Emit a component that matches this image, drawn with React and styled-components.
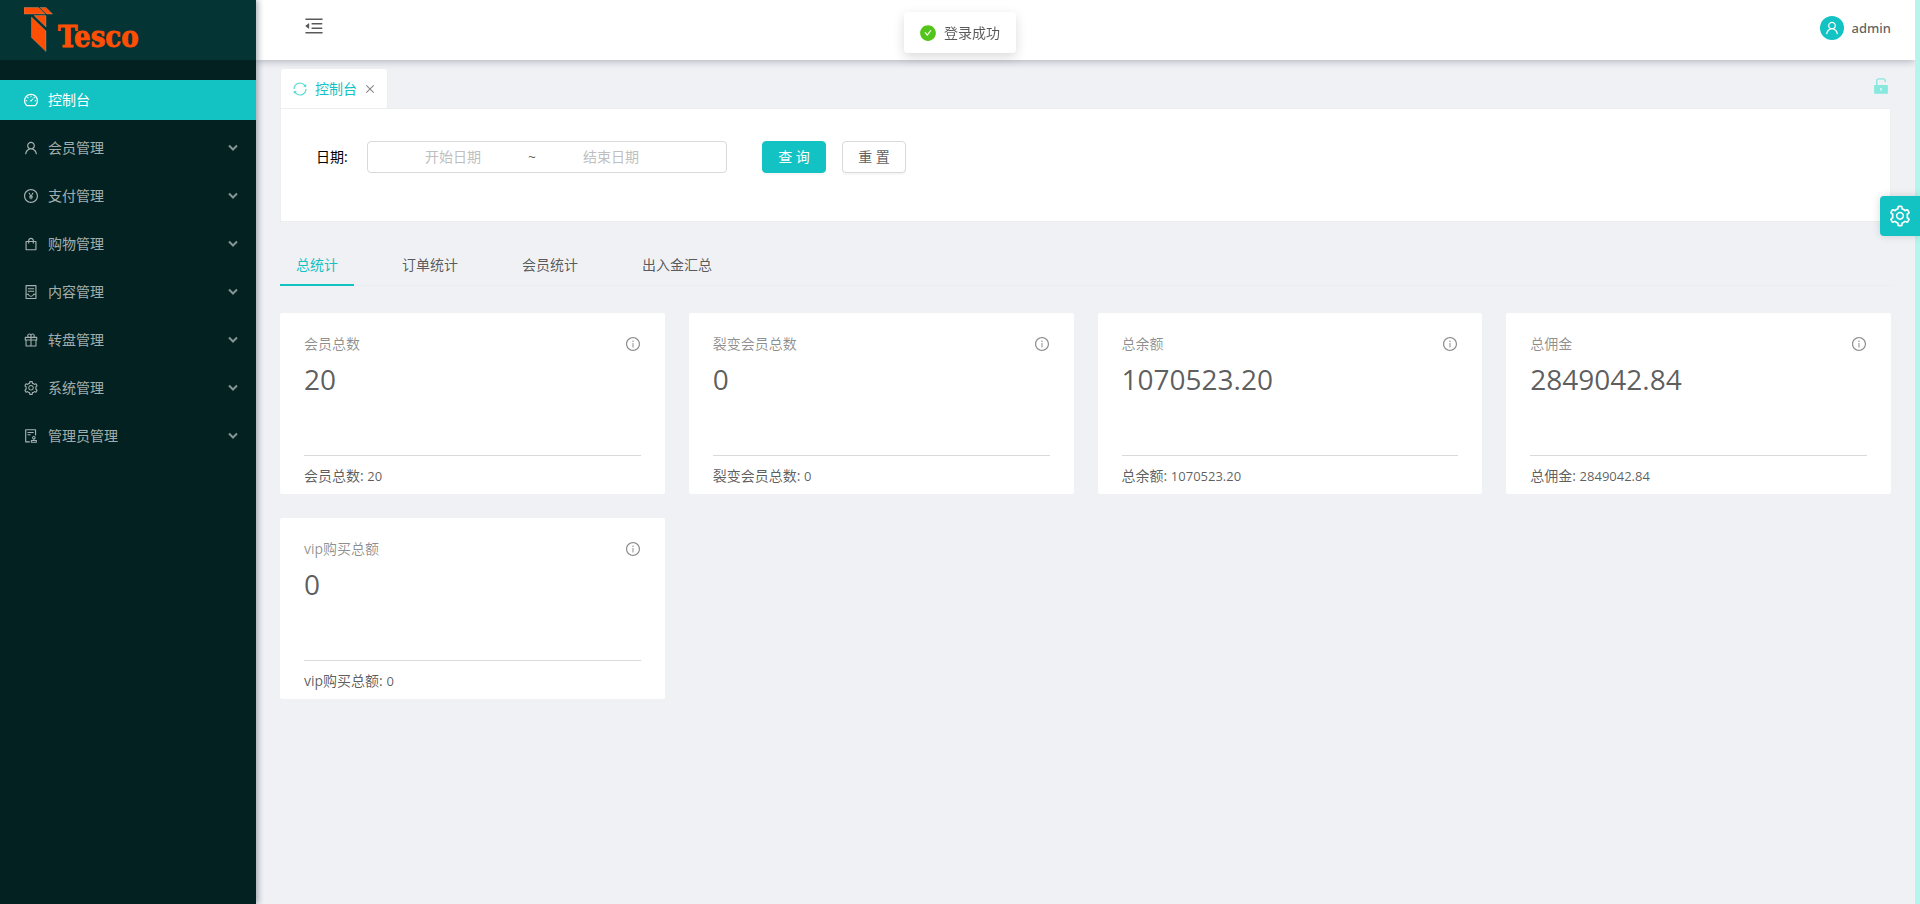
import React, { useState } from "react";
import styled, { createGlobalStyle, css } from "styled-components";
import {
  AiFillCheckCircle,
  AiFillUnlock,
  AiOutlineAudit,
  AiOutlineClose,
  AiOutlineContainer,
  AiOutlineDashboard,
  AiOutlineGift,
  AiOutlineInfoCircle,
  AiOutlineMenuFold,
  AiOutlinePayCircle,
  AiOutlineSetting,
  AiOutlineShopping,
  AiOutlineSync,
  AiOutlineUser,
} from "react-icons/ai";

const teal = "#13c2c2";
const tealSoft = "#87e8de";
const textColor = "rgba(0, 0, 0, 0.65)";

const GlobalStyle = createGlobalStyle`
  *, *::before, *::after { box-sizing: border-box; }
  body {
    margin: 0;
    color: ${textColor};
    background: #f0f2f5;
    font: 14px/22px "Open Sans", "Noto Sans CJK SC", sans-serif;
  }
  button, input { font: inherit; color: inherit; }
  button { padding: 0; border: 0; background: none; cursor: pointer; }
  svg { display: block; flex: none; }
`;

const Layout = styled.div`
  display: flex;
  min-height: 100vh;
  background: #f0f1f5;
`;

const Sidebar = styled.aside`
  z-index: 2;
  flex: 0 0 256px;
  background: #032121;
  box-shadow: 2px 0 6px rgba(0, 21, 41, 0.35);
`;

const Brand = styled.a`
  display: block;
  height: 60px;
  padding-left: 24px;
  background: #053434;
`;

const Menu = styled.nav`
  display: flex;
  flex-direction: column;
  gap: 8px;
  padding-top: 20px;
`;

const MenuItem = styled.a`
  display: flex;
  align-items: center;
  gap: 9px;
  height: 40px;
  padding: 0 18px 0 23px;
  color: rgba(255, 255, 255, 0.65);
  text-decoration: none;
  ${({ $active }) =>
    $active &&
    css`
      color: #fff;
      background: ${teal};
    `}
`;

const MenuLabel = styled.span`
  flex: 1;
`;

const Main = styled.div`
  flex: 1;
  min-width: 0;
`;

const Header = styled.header`
  display: flex;
  align-items: center;
  justify-content: space-between;
  height: 60px;
  padding: 0 24px 0 47px;
  background: #fff;
  box-shadow: 0 1px 8px rgba(0, 21, 41, 0.3);
`;

const IconButton = styled.button`
  display: flex;
  color: ${({ $color }) => $color || "inherit"};
`;

const FoldButton = styled(IconButton)`
  margin-bottom: 8px;
`;

const UnlockButton = styled(IconButton)`
  margin-bottom: 4px;
`;

const User = styled.button`
  display: flex;
  align-items: center;
  gap: 8px;
  margin-bottom: 4px;
  font-family: "Noto Sans", sans-serif;
  font-size: 13px;
  font-weight: 500;
`;

const Avatar = styled.span`
  display: grid;
  place-items: center;
  width: 24px;
  height: 24px;
  border-radius: 50%;
  color: #fff;
  background: ${teal};
`;

const Content = styled.main`
  padding: 8px 24px 24px;
`;

const PageTabs = styled.div`
  display: flex;
  align-items: center;
  justify-content: space-between;
`;

const PageTab = styled.div`
  display: flex;
  align-items: center;
  gap: 7px;
  height: 40px;
  padding: 0 11px;
  border: 1px solid #eee;
  border-bottom: 0;
  border-radius: 4px 4px 0 0;
  color: ${teal};
  background: #fff;
`;

const Filter = styled.form`
  display: flex;
  align-items: flex-start;
  height: 114px;
  padding: 32px 35px;
  border: 1px solid #eee;
  background: #fff;
`;

const FilterLabel = styled.label`
  width: 51px;
  color: #000;
  line-height: 32px;
`;

const DateRange = styled.div`
  display: flex;
  align-items: center;
  width: 360px;
  height: 32px;
  margin-right: 35px;
  padding: 0 41px 0 11px;
  border: 1px solid #d9d9d9;
  border-radius: 4px;
`;

const DateInput = styled.input`
  flex: 1;
  min-width: 0;
  padding: 0;
  border: 0;
  outline: 0;
  background: none;
  text-align: center;
  &::placeholder {
    color: #bfbfbf;
    opacity: 1;
  }
`;

const Tilde = styled.span`
  width: 10px;
  text-align: center;
`;

const Actions = styled.div`
  display: flex;
  gap: 16px;
`;

const Button = styled.button`
  width: 64px;
  height: 32px;
  border: 1px solid ${({ $primary }) => ($primary ? teal : "#d9d9d9")};
  border-radius: 4px;
  color: ${({ $primary }) => ($primary ? "#fff" : textColor)};
  background: ${({ $primary }) => ($primary ? teal : "#fff")};
  box-shadow: 0 2px 0 rgba(0, 0, 0, 0.03);
`;

const StatTabs = styled.div`
  display: flex;
  gap: 32px;
  margin: 20px 0 27px;
  box-shadow: inset 0 -1px 0 #ebedf0;
`;

const StatTab = styled.button`
  height: 44px;
  padding: 2px 16px 0;
  ${({ $active }) =>
    $active &&
    css`
      color: ${teal};
      box-shadow: inset 0 -2px 0 ${teal};
    `}
`;

const Cards = styled.div`
  display: grid;
  grid-template-columns: repeat(4, 1fr);
  gap: 24px;
`;

const Card = styled.section`
  padding: 20px 24px 7px;
  border-radius: 2px;
  background: #fff;
`;

const CardHead = styled.div`
  display: flex;
  align-items: center;
  justify-content: space-between;
  color: rgba(0, 0, 0, 0.45);
`;

const Total = styled.div`
  height: 38px;
  margin: 5px 0 57px;
  font-size: 28px;
  line-height: 38px;
`;

const CardFoot = styled.div`
  padding-top: 9px;
  border-top: 1px solid #d9dadb;
`;

const Amount = styled.span`
  font-size: 13px;
`;

const Toast = styled.div`
  position: fixed;
  z-index: 10;
  top: 12px;
  left: 50%;
  display: flex;
  align-items: center;
  gap: 7px;
  height: 41px;
  padding: 0 16px 0 15px;
  border-radius: 4px;
  background: #fff;
  box-shadow: 0 4px 12px rgba(0, 0, 0, 0.15);
  transform: translateX(-50%);
`;

const SettingsHandle = styled.button`
  position: fixed;
  z-index: 10;
  top: 196px;
  right: 0;
  display: grid;
  place-items: center;
  width: 40px;
  height: 40px;
  border-radius: 4px 0 0 4px;
  color: #fff;
  background: ${teal};
  box-shadow: 0 0 8px rgba(0, 0, 0, 0.15);
`;

const ScrollStrip = styled.div`
  z-index: 1;
  flex: 0 0 5px;
  background: #b5f5ec;
`;

const Logo = () => (
  <svg width="120" height="60" viewBox="24 0 120 60" role="img" aria-label="Tesco">
    <path
      fill="#ff4f05"
      stroke="#b9a08c"
      strokeWidth="0.4"
      d="M24 7.500h14.500l6.500 6.500H24zM40 7.500h6l6.500 6.500h-6zM34 15.500h12V27zM31.500 17 46 31v20.500L31.500 37.500z"
    />
    <text
      x="58"
      y="47"
      fill="#ff4f05"
      stroke="#ff4f05"
      strokeWidth="0.8"
      fontSize="29"
      fontWeight="700"
      fontFamily='"DejaVu Serif Condensed", "DejaVu Serif", serif'
    >
      Tesco
    </text>
  </svg>
);

const Chevron = () => (
  <svg
    width="10"
    height="10"
    viewBox="0 0 10 10"
    fill="none"
    stroke="currentColor"
    strokeWidth="2"
    opacity="0.8"
  >
    <path d="M1 2.500l4 4 4-4" />
  </svg>
);

const menu = [
  ["控制台", AiOutlineDashboard],
  ["会员管理", AiOutlineUser],
  ["支付管理", AiOutlinePayCircle],
  ["购物管理", AiOutlineShopping],
  ["内容管理", AiOutlineContainer],
  ["转盘管理", AiOutlineGift],
  ["系统管理", AiOutlineSetting],
  ["管理员管理", AiOutlineAudit],
];

const statTabs = ["总统计", "订单统计", "会员统计", "出入金汇总"];

const stats = [
  ["会员总数", "20"],
  ["裂变会员总数", "0"],
  ["总余额", "1070523.20"],
  ["总佣金", "2849042.84"],
  ["vip购买总额", "0"],
];

export default function App() {
  const [tab, setTab] = useState(0);

  return (
    <>
      <GlobalStyle />
      <Layout>
        <Sidebar>
          <Brand href="#">
            <Logo />
          </Brand>
          <Menu>
            {menu.map(([label, Icon], i) => (
              <MenuItem key={label} href="#" $active={i === 0}>
                <Icon size={16} />
                <MenuLabel>{label}</MenuLabel>
                {i > 0 && <Chevron />}
              </MenuItem>
            ))}
          </Menu>
        </Sidebar>
        <Main>
          <Header>
            <FoldButton aria-label="收起菜单">
              <AiOutlineMenuFold size={22} />
            </FoldButton>
            <User>
              <Avatar>
                <AiOutlineUser size={16} />
              </Avatar>
              admin
            </User>
          </Header>
          <Content>
            <PageTabs>
              <PageTab>
                <IconButton aria-label="刷新" $color="#5cdbd3">
                  <AiOutlineSync size={16} />
                </IconButton>
                控制台
                <IconButton aria-label="关闭" $color="rgba(0, 0, 0, 0.5)">
                  <AiOutlineClose size={12} />
                </IconButton>
              </PageTab>
              <UnlockButton aria-label="解锁" $color={tealSoft}>
                <AiFillUnlock size={20} />
              </UnlockButton>
            </PageTabs>
            <Filter onSubmit={(e) => e.preventDefault()}>
              <FilterLabel htmlFor="start">日期:</FilterLabel>
              <DateRange>
                <DateInput id="start" placeholder="开始日期" />
                <Tilde>~</Tilde>
                <DateInput aria-label="结束日期" placeholder="结束日期" />
              </DateRange>
              <Actions>
                <Button type="submit" $primary>
                  查 询
                </Button>
                <Button type="reset">重 置</Button>
              </Actions>
            </Filter>
            <StatTabs role="tablist">
              {statTabs.map((label, i) => (
                <StatTab
                  key={label}
                  role="tab"
                  aria-selected={tab === i}
                  $active={tab === i}
                  onClick={() => setTab(i)}
                >
                  {label}
                </StatTab>
              ))}
            </StatTabs>
            <Cards>
              {stats.map(([label, value]) => (
                <Card key={label}>
                  <CardHead>
                    {label}
                    <AiOutlineInfoCircle size={16} />
                  </CardHead>
                  <Total>{value}</Total>
                  <CardFoot>
                    {label}: <Amount>{value}</Amount>
                  </CardFoot>
                </Card>
              ))}
            </Cards>
          </Content>
        </Main>
        <ScrollStrip />
      </Layout>
      <Toast role="status">
        <AiFillCheckCircle size={18} color="#52c41a" />
        登录成功
      </Toast>
      <SettingsHandle aria-label="设置">
        <AiOutlineSetting size={24} />
      </SettingsHandle>
    </>
  );
}
